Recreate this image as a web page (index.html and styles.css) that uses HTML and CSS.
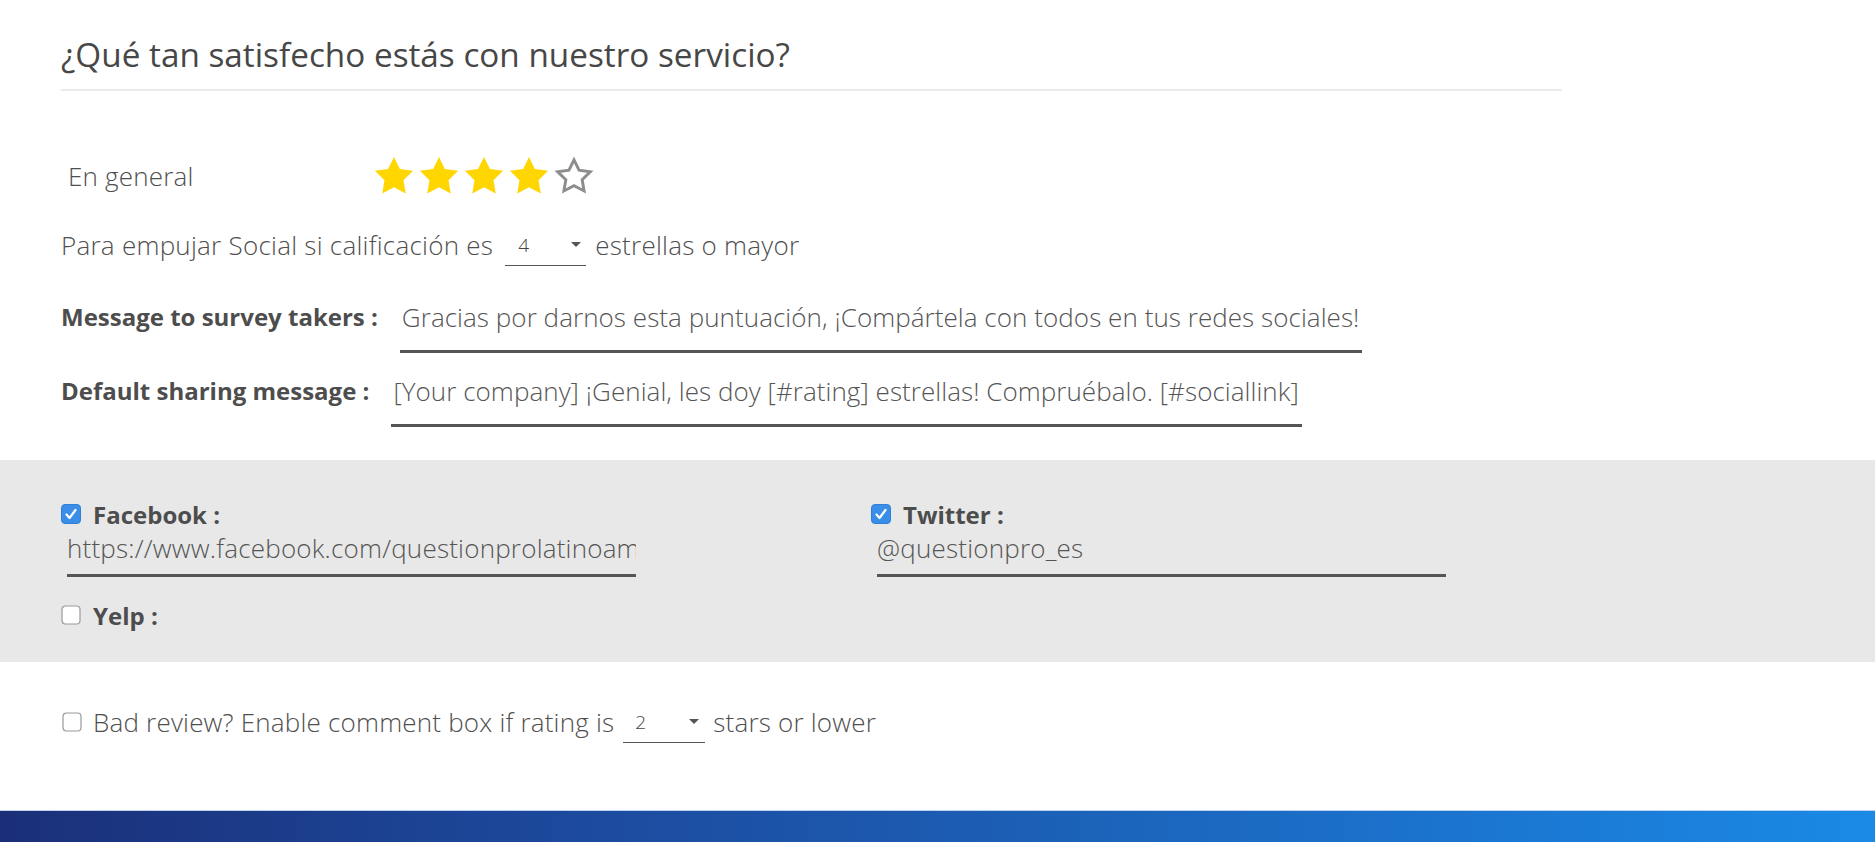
FILE: index.html
```html
<!DOCTYPE html>
<html lang="es">
<head>
<meta charset="utf-8">
<title>Social rating</title>
<link rel="stylesheet" href="styles.css">
</head>
<body>
<div class="page">
  <section class="question">
    <h2 class="q-title">¿Qué tan satisfecho estás con nuestro servicio?</h2>

    <div class="rating-row">
      <span class="rating-label">En general</span>
      <div class="stars">
        <svg class="star" viewBox="0 0 24 24"><path class="on" d="M12 1.6l3.2 6.6 7.2 1-5.2 5.1 1.2 7.2L12 18.1l-6.4 3.4 1.2-7.2L1.6 9.2l7.2-1z"/></svg>
        <svg class="star" viewBox="0 0 24 24"><path class="on" d="M12 1.6l3.2 6.6 7.2 1-5.2 5.1 1.2 7.2L12 18.1l-6.4 3.4 1.2-7.2L1.6 9.2l7.2-1z"/></svg>
        <svg class="star" viewBox="0 0 24 24"><path class="on" d="M12 1.6l3.2 6.6 7.2 1-5.2 5.1 1.2 7.2L12 18.1l-6.4 3.4 1.2-7.2L1.6 9.2l7.2-1z"/></svg>
        <svg class="star" viewBox="0 0 24 24"><path class="on" d="M12 1.6l3.2 6.6 7.2 1-5.2 5.1 1.2 7.2L12 18.1l-6.4 3.4 1.2-7.2L1.6 9.2l7.2-1z"/></svg>
        <svg class="star" viewBox="0 0 24 24"><path class="off" d="M12 3.2l2.75 5.6 6.15.9-4.45 4.35 1.05 6.1L12 17.3l-5.5 2.85 1.05-6.1L3.1 9.7l6.15-.9z"/></svg>
      </div>
    </div>

    <div class="push-row">
      <span>Para empujar Social si calificación es</span>
      <span class="select sel-push"><span class="sel-val">4</span><svg class="caret" viewBox="0 0 10 5"><path d="M0 0h10L5 5z"/></svg></span>
      <span>estrellas o mayor</span>
    </div>

    <div class="field-row">
      <span class="field-label">Message to survey takers :</span>
      <div class="text-input fit-input">Gracias por darnos esta puntuación, ¡Compártela con todos en tus redes sociales!</div>
    </div>

    <div class="field-row">
      <span class="field-label">Default sharing message :</span>
      <div class="text-input fit-input">[Your company] ¡Genial, les doy [#rating] estrellas! Compruébalo. [#sociallink]</div>
    </div>
  </section>

  <section class="social-panel">
    <div class="social-grid">
      <div class="social-item">
        <div class="check-row">
          <svg class="cb" viewBox="0 0 20 20"><rect class="cb-on" x="0.5" y="0.5" width="19" height="19" rx="3.5"/><path class="tick" d="M5.5 10.5l3 3.5 6-8"/></svg>
          <span class="social-label">Facebook :</span>
        </div>
        <div class="text-input social-input">https://www.facebook.com/questionprolatinoamerica</div>
      </div>
      <div class="social-item">
        <div class="check-row">
          <svg class="cb" viewBox="0 0 20 20"><rect class="cb-on" x="0.5" y="0.5" width="19" height="19" rx="3.5"/><path class="tick" d="M5.5 10.5l3 3.5 6-8"/></svg>
          <span class="social-label">Twitter :</span>
        </div>
        <div class="text-input social-input">@questionpro_es</div>
      </div>
      <div class="social-item yelp-item">
        <div class="check-row">
          <svg class="cb" viewBox="0 0 20 20"><rect class="cb-off" x="1" y="1" width="18" height="18" rx="3.5"/></svg>
          <span class="social-label">Yelp :</span>
        </div>
      </div>
    </div>
  </section>

  <div class="bad-review">
    <svg class="cb" viewBox="0 0 20 20"><rect class="cb-off" x="1" y="1" width="18" height="18" rx="3.5"/></svg>
    <span>Bad review? Enable comment box if rating is</span>
    <span class="select sel-bad"><span class="sel-val">2</span><svg class="caret" viewBox="0 0 10 5"><path d="M0 0h10L5 5z"/></svg></span>
    <span>stars or lower</span>
  </div>

  <footer class="footer-bar"></footer>
</div>
</body>
</html>
```

FILE: styles.css
```css
* { box-sizing: border-box; }

html, body {
  margin: 0;
  padding: 0;
  background: #ffffff;
}

body {
  font-family: "Open Sans", "Liberation Sans", sans-serif;
  color: #4f4f4f;
  width: 1875px;
  height: 844px;
  overflow: hidden;
}

.page {
  display: flex;
  flex-direction: column;
}

/* ---------- question block ---------- */
.question {
  padding: 0 0 0 61px;
  display: flex;
  flex-direction: column;
}

.q-title {
  margin: 0;
  width: 1501px;
  padding: 34px 0 15px 0;
  font-size: 33.3px;
  line-height: 40px;
  font-weight: 400;
  color: #474747;
  border-bottom: 2px solid #ebebeb;
}

.rating-row {
  margin-top: 63px;
  height: 44px;
  display: flex;
  align-items: center;
}

.rating-label {
  width: 311px;
  padding-left: 7px;
  flex-shrink: 0;
  font-size: 26px;
  font-weight: 300;
  letter-spacing: 0.2px;
}

.stars {
  display: flex;
  gap: 1px;
}

.star {
  width: 44px;
  height: 44px;
  display: block;
}

.star .on { fill: #ffd600; }
.star .off { fill: none; stroke: #8d8d8d; stroke-width: 1.6; stroke-linejoin: miter; }

.push-row {
  margin-top: 27px;
  height: 40px;
  display: flex;
  align-items: center;
  font-size: 26px;
  font-weight: 300;
  letter-spacing: 0.25px;
}

.select {
  display: inline-flex;
  align-items: center;
  justify-content: space-between;
  height: 42px;
  border-bottom: 1.5px solid #555;
  font-size: 19px;
  font-weight: 300;
  color: #444;
  letter-spacing: 0;
}

.sel-push {
  width: 81px;
  margin: 0 9px 0 12px;
  padding: 0 5px 0 13px;
}

.caret {
  width: 10px;
  height: 5px;
  fill: #555;
}

.field-row {
  margin-top: 18px;
  display: flex;
  align-items: flex-start;
}

.push-row + .field-row { margin-top: 32px; }

.field-label {
  flex-shrink: 0;
  font-size: 24px;
  line-height: 40px;
  font-weight: 700;
  color: #4d4d4d;
  margin-right: 22px;
}

.text-input {
  font-size: 26px;
  font-weight: 300;
  line-height: 40px;
  padding: 0 0 13px 2px;
  border-bottom: 3px solid #555;
  white-space: nowrap;
  overflow: hidden;
  color: #555;
}

.fit-input {
  width: fit-content;
  padding-right: 3px;
  letter-spacing: 0.05px;
}

/* ---------- social panel ---------- */
.social-panel {
  margin-top: 33px;
  height: 202px;
  background: #e8e8e8;
  padding: 39px 0 0 61px;
}

.social-grid {
  display: grid;
  grid-template-columns: 810px 810px;
  row-gap: 23px;
}

.check-row {
  height: 30px;
  display: flex;
  align-items: center;
  gap: 12px;
}

.cb {
  width: 20px;
  height: 20px;
  display: block;
  flex-shrink: 0;
}

.cb-on { fill: #3a8ee8; stroke: #2f80d8; stroke-width: 1; }
.tick { fill: none; stroke: #ffffff; stroke-width: 2.2; stroke-linecap: round; stroke-linejoin: round; }
.cb-off { fill: #ffffff; stroke: #9a9a9a; stroke-width: 1.2; }

.social-label {
  font-size: 24px;
  font-weight: 700;
  color: #4d4d4d;
}

.social-input {
  margin: 4px 0 0 6px;
  width: 569px;
  line-height: 30px;
  padding: 0 0 11px 0;
  font-size: 26px;
  letter-spacing: 0.2px;
}

/* ---------- bad review ---------- */
.bad-review {
  margin-top: 40px;
  padding-left: 62px;
  height: 40px;
  display: flex;
  align-items: center;
  font-size: 26px;
  font-weight: 300;
  letter-spacing: 0.2px;
}

.bad-review .cb { margin-right: 11px; }

.sel-bad {
  width: 82px;
  margin: 0 8px 0 9px;
  padding: 0 6px 0 12px;
}

/* ---------- footer ---------- */
.footer-bar {
  margin-top: 68px;
  height: 32px;
  border-top: 1px solid #bcd2ee;
  background: linear-gradient(90deg, #1b2f78 0%, #1c4597 25%, #1c5bb1 50%, #1b72cc 75%, #1a8ae6 100%);
}
```
